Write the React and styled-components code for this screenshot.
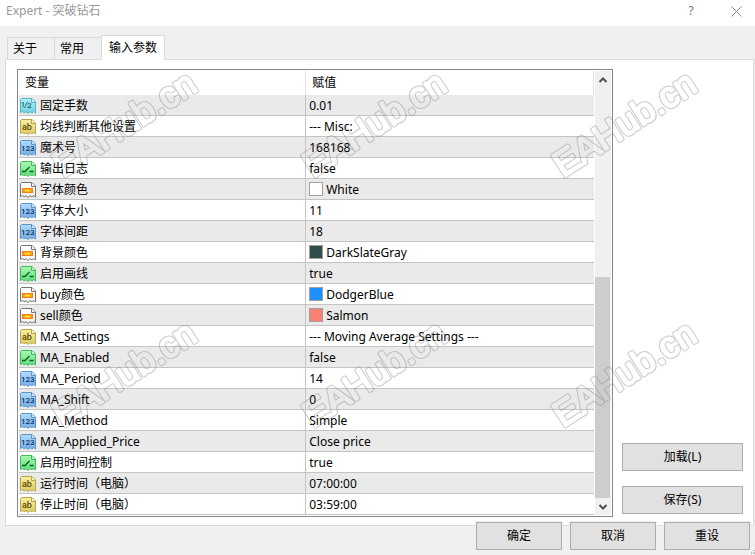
import React, { useState } from 'react'
import styled, { createGlobalStyle } from 'styled-components';

const TABS = ['关于', '常用', '输入参数'];

const PARAMS = [
    { type: 'double', name: '固定手数', value: '0.01' },
    { type: 'string', name: '均线判断其他设置', value: '--- Misc:' },
    { type: 'int', name: '魔术号', value: '168168' },
    { type: 'bool', name: '输出日志', value: 'false' },
    { type: 'color', name: '字体颜色', value: 'White', color: '#ffffff' },
    { type: 'int', name: '字体大小', value: '11' },
    { type: 'int', name: '字体间距', value: '18' },
    { type: 'color', name: '背景颜色', value: 'DarkSlateGray', color: '#2f4f4f' },
    { type: 'bool', name: '启用画线', value: 'true' },
    { type: 'color', name: 'buy颜色', value: 'DodgerBlue', color: '#1e90ff' },
    { type: 'color', name: 'sell颜色', value: 'Salmon', color: '#fa8072' },
    { type: 'string', name: 'MA_Settings', value: '--- Moving Average Settings ---' },
    { type: 'bool', name: 'MA_Enabled', value: 'false' },
    { type: 'int', name: 'MA_Period', value: '14' },
    { type: 'int', name: 'MA_Shift', value: '0' },
    { type: 'int', name: 'MA_Method', value: 'Simple' },
    { type: 'int', name: 'MA_Applied_Price', value: 'Close price' },
    { type: 'bool', name: '启用时间控制', value: 'true' },
    { type: 'string', name: '运行时间（电脑）', value: '07:00:00' },
    { type: 'string', name: '停止时间（电脑）', value: '03:59:00' },
];

const ICON_COLORS = {
    double: { from: '#b4f0f8', to: '#6cd0e0', line: '#5ab4c4', ink: '#12606e' },
    string: { from: '#f8f0a4', to: '#dccc60', line: '#b8a648', ink: '#5c4c08' },
    int: { from: '#b4dcfa', to: '#74ace4', line: '#5c94cc', ink: '#0c3468' },
    bool: { from: '#a8f8b0', to: '#60dc80', line: '#44b85c', ink: '#0c6020' },
    color: { from: '#ffffff', to: '#f0f0f0', line: '#747474', ink: '#000000' },
};

const TypeIcon = ({ type }) => {
    const c = ICON_COLORS[type];
    return (
        <IconSvg viewBox="0 0 16 16" aria-hidden="true">
            <defs>
                <linearGradient id={`paper-${type}`} x1="0" y1="0" x2="0" y2="1">
                    <stop offset="0" stopColor={c.from} />
                    <stop offset="1" stopColor={c.to} />
                </linearGradient>
                <radialGradient id="amber">
                    <stop offset="0" stopColor="#fff040" />
                    <stop offset="1" stopColor="#f89010" />
                </radialGradient>
            </defs>
            {/* torn sheet with a folded corner */}
            <path
                d="M1.5 .5H12L15.5 4V15L13.5 13.6L12 15L10 13.6L8 15.5L6 13.8L4 14.8L2.5 13.4L.5 14.5V1.5Z"
                fill={`url(#paper-${type})`}
                stroke={c.line}
                strokeLinejoin="round"
            />
            <path d="M11.5 .5V4.5H15.5" fill="#ffffff" fillOpacity=".4" stroke={c.line} />
            {type === 'color' && (
                <rect x="2.5" y="6.5" width="10" height="4" fill="url(#amber)" stroke="#f48010" />
            )}
            {type === 'bool' && (
                <path d="M2 10.5H5L9.5 6M9.5 10.5H13.5" fill="none" stroke={c.ink} strokeWidth="1.4" />
            )}
            {type === 'double' && (
                <>
                    <IconText x="1" y="9" fill={c.ink} $size={7}>1</IconText>
                    <path d="M4.5 10L7.5 3.5" stroke={c.ink} strokeWidth=".8" />
                    <IconText x="7" y="10" fill={c.ink} $size={8}>2</IconText>
                </>
            )}
            {type === 'string' && (
                <IconText x="2" y="11" fill={c.ink} $size={9}>ab</IconText>
            )}
            {type === 'int' && (
                <IconText x="1" y="11" fill={c.ink} $size={8}>123</IconText>
            )}
        </IconSvg>
    )
}

const Watermark = () => (
    <WatermarkSvg aria-hidden="true">
        <defs>
            <mask id="outline" maskUnits="userSpaceOnUse" x="0" y="0" width="250" height="250">
                <MarkText x="0" y="0" transform="translate(63 178) rotate(-33)" fill="#fff" stroke="#fff" strokeWidth="4">EAHub.cn</MarkText>
                <MarkText x="0" y="0" transform="translate(63 178) rotate(-33)" fill="#000" stroke="#000" strokeWidth="2">EAHub.cn</MarkText>
            </mask>
            <pattern id="mark" width="250" height="250" patternUnits="userSpaceOnUse">
                <rect width="250" height="250" fill="#808080" fillOpacity=".4" mask="url(#outline)" />
            </pattern>
        </defs>
        <rect width="100%" height="100%" fill="url(#mark)" />
    </WatermarkSvg>
)

const App = () => {
    const [tab, setTab] = useState('输入参数');

    return (
        <Dialog>
            <GlobalStyle />
            <TitleBar>
                <Title>Expert - 突破钻石</Title>
                <TitleButton type="button" aria-label="Help">?</TitleButton>
                <TitleButton type="button" aria-label="Close">
                    <svg width="11" height="11" viewBox="0 0 11 11">
                        <path d="M.5 .5L10.5 10.5M10.5 .5L.5 10.5" stroke="#888888" fill="none" />
                    </svg>
                </TitleButton>
            </TitleBar>
            <TabList role="tablist">
                {TABS.map((name) => (
                    <Tab key={name} type="button" role="tab" aria-selected={tab === name} $active={tab === name} onClick={() => setTab(name)}>
                        {name}
                    </Tab>
                ))}
            </TabList>
            <Panel role="tabpanel">
                <ListBox>
                    <Table>
                        <thead>
                            <tr>
                                <HeadCell $first>变量</HeadCell>
                                <HeadCell>赋值</HeadCell>
                            </tr>
                        </thead>
                        <tbody>
                            {PARAMS.map((param) => (
                                <Row key={param.name}>
                                    <Cell>
                                        <CellContent>
                                            <TypeIcon type={param.type} />
                                            {param.name}
                                        </CellContent>
                                    </Cell>
                                    <Cell $value>
                                        <CellContent>
                                            {param.color && <Swatch $color={param.color} />}
                                            {param.value}
                                        </CellContent>
                                    </Cell>
                                </Row>
                            ))}
                        </tbody>
                    </Table>
                    <ScrollBar>
                        <ScrollButton type="button" aria-label="Scroll up">
                            <svg width="8" height="6" viewBox="0 0 8 6">
                                <path d="M.5 5L4 1.5L7.5 5" stroke="#505050" strokeWidth="2" fill="none" />
                            </svg>
                        </ScrollButton>
                        <ScrollTrack>
                            <ScrollThumb />
                        </ScrollTrack>
                        <ScrollButton type="button" aria-label="Scroll down">
                            <svg width="8" height="6" viewBox="0 0 8 6">
                                <path d="M.5 1L4 4.5L7.5 1" stroke="#505050" strokeWidth="2" fill="none" />
                            </svg>
                        </ScrollButton>
                    </ScrollBar>
                </ListBox>
                <SideButtons>
                    <Button type="button">加载(L)</Button>
                    <Button type="button">保存(S)</Button>
                </SideButtons>
            </Panel>
            <Footer>
                <FooterButton type="button">确定</FooterButton>
                <FooterButton type="button">取消</FooterButton>
                <FooterButton type="button">重设</FooterButton>
            </Footer>
            <Grip viewBox="0 0 4 4" aria-hidden="true">
                <path d="M2 0h2v1h-2zM0 2h1v2h-1zM2 2h2v2h-2z" fill="#bfbfbf" />
            </Grip>
            <Watermark />
        </Dialog>
    )
}
export default App

const GlobalStyle = createGlobalStyle`
    * {
        box-sizing: border-box;
    }
    body {
        margin: 0;
        background: #f0f0f0;
        color: #000000;
    }
    body, button {
        font-family: 'Noto Sans', 'Noto Sans CJK SC', sans-serif;
        font-size: 12px;
        line-height: 16px;
    }
`;

const Dialog = styled.div`
    position: relative;
    display: flex;
    flex-direction: column;
    min-height: 100vh;
`;

const TitleBar = styled.div`
    display: flex;
    align-items: center;
    height: 26px;
    padding: 0 6px 4px;
    background: #ffffff;
    color: #999999;
`;

const Title = styled.div`
    flex: 1;
`;

const TitleButton = styled.button`
    display: flex;
    align-items: center;
    justify-content: center;
    width: 26px;
    height: 20px;
    margin-left: 19px;
    padding: 0;
    border: 0;
    background: none;
    color: #777777;
`;

const TabList = styled.div`
    display: flex;
    align-items: flex-end;
    padding: 9px 7px 0;
`;

const Tab = styled.button`
    position: relative;
    z-index: ${(props) => (props.$active ? 1 : 0)};
    height: ${(props) => (props.$active ? 25 : 22)}px;
    margin-bottom: ${(props) => (props.$active ? -1 : 0)}px;
    padding: ${(props) => (props.$active ? '0 7px 1px' : '0 17px 0 5px')};
    border: 1px solid #d9d9d9;
    border-bottom: 0;
    background: ${(props) => (props.$active ? '#ffffff' : '#f0f0f0')};

    & + & {
        margin-left: -1px;
    }
`;

const Panel = styled.div`
    display: flex;
    gap: 9px;
    margin: 0 1px 0 5px;
    padding: 9px 10px 8px 11px;
    border: 1px solid #dcdcdc;
    background: #ffffff;
`;

const ListBox = styled.div`
    display: flex;
    flex: 1;
    min-width: 0;
    gap: 1px;
    padding: 1px;
    border: 1px solid #828790;
`;

const Table = styled.table`
    flex: 1;
    border-collapse: separate;
    border-spacing: 0;
    table-layout: fixed;
`;

const HeadCell = styled.th`
    width: ${(props) => (props.$first ? '49.95%' : 'auto')};
    height: 24px;
    padding: 0 6px;
    border-right: 1px solid #e5e5e5;
    font-weight: normal;
    text-align: left;
`;

const Row = styled.tr`
    background: #ffffff;

    &:nth-child(odd) {
        background: #eaeaea;
    }
`;

const Cell = styled.td`
    height: 21px;
    padding: ${(props) => (props.$value ? '0 3px' : '0 1px')};
    border-right: ${(props) => (props.$value ? '0' : '1px solid #c4c4c4')};
    border-bottom: 1px solid #c4c4c4;
    white-space: nowrap;
`;

const CellContent = styled.div`
    display: flex;
    align-items: center;
    height: 20px;
    padding-top: 2px;
`;

const IconSvg = styled.svg`
    flex-shrink: 0;
    width: 16px;
    height: 16px;
    margin-right: 4px;
`;

const IconText = styled.text`
    font-family: Roboto, sans-serif;
    font-size: ${(props) => props.$size}px;
    font-weight: 500;
`;

const Swatch = styled.span`
    width: 14px;
    height: 14px;
    margin: 0 3px 2px 0;
    border: 1px solid #a0a0a0;
    background: ${(props) => props.$color};
`;

const ScrollBar = styled.div`
    display: flex;
    flex-direction: column;
    width: 16px;
    background: #f0f0f0;
`;

const ScrollButton = styled.button`
    display: flex;
    align-items: center;
    justify-content: center;
    height: 17px;
    padding: 0;
    border: 0;
    background: #f0f0f0;
`;

const ScrollTrack = styled.div`
    display: flex;
    flex: 1;
    flex-direction: column;
    justify-content: flex-end;
    padding-right: 1px;
`;

const ScrollThumb = styled.div`
    height: 54%;
    background: #cdcdcd;
`;

const SideButtons = styled.div`
    display: flex;
    flex-direction: column;
    justify-content: flex-end;
    gap: 15px;
    width: 121px;
    padding-bottom: 3px;
`;

const Button = styled.button`
    height: 28px;
    padding: 0 8px;
    border: 1px solid #adadad;
    background: #e1e1e1;
`;

const Footer = styled.div`
    position: relative;
    display: flex;
    justify-content: flex-end;
    gap: 8px;
    margin-top: -4px;
    padding: 0 5px 5px;
`;

const FooterButton = styled(Button)`
    width: 86px;
    box-shadow: 0 0 0 1px #f0f0f0;
`;

const Grip = styled.svg`
    position: absolute;
    right: 0;
    bottom: 1px;
    width: 4px;
    height: 4px;
`;

const WatermarkSvg = styled.svg`
    position: absolute;
    inset: 0;
    width: 100%;
    height: 100%;
    pointer-events: none;
`;

const MarkText = styled.text`
    font-family: 'Liberation Sans', sans-serif;
    font-size: 36px;
    stroke-linejoin: round;
`;
